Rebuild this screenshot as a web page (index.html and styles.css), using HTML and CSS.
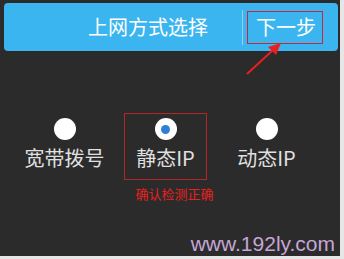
FILE: index.html
```html
<!DOCTYPE html>
<html>
<head>
	<title>上网方式选择</title>
	<link rel="stylesheet" href="styles.css">
</head>
<body>
	<div class="screen">
		<div class="topbar">
			<span class="title">上网方式选择</span>
			<span class="divider"></span>
			<span class="next">下一步</span>
		</div>
		<div class="options">
			<div class="opt">
				<div class="box">
					<span class="radio"></span>
					<span class="label">宽带拨号</span>
				</div>
			</div>
			<div class="opt">
				<div class="box marked">
					<span class="radio checked"></span>
					<span class="label">静态IP</span>
				</div>
				<p class="note">确认检测正确</p>
			</div>
			<div class="opt">
				<div class="box">
					<span class="radio"></span>
					<span class="label">动态IP</span>
				</div>
			</div>
		</div>
		<div class="watermark">www.192ly.com</div>
		<svg class="arrow" width="50" height="40" viewBox="0 0 50 40">
			<line x1="4" y1="36" x2="30" y2="12" stroke="#e8201e" stroke-width="2"/>
			<polygon points="38,5 25,9 33,17" fill="#e8201e"/>
		</svg>
	</div>
</body>
</html>
```

FILE: styles.css
```css
body {
	margin: 0;
	background: #e6e6e6;
	font-family: "Noto Sans CJK SC", "Noto Sans", sans-serif;
}

.screen {
	position: relative;
	width: 340px;
	height: 256px;
	background: #2b2b2b;
	overflow: hidden;
}

.topbar {
	display: flex;
	align-items: center;
	margin: 3px 0 0 4px;
	width: 334px;
	height: 48px;
	background: #3ab5ef;
	border-radius: 4px;
	color: white;
	font-size: 20px;
	line-height: 24px;
}

.title {
	margin-left: 84px;
}

.divider {
	width: 1px;
	height: 35px;
	margin-left: 34px;
	background: #8ed3f4;
}

.next {
	box-sizing: border-box;
	width: 76px;
	height: 33px;
	margin-left: 4px;
	padding: 3px 0 0 8px;
	border: 1px solid #c8283a;
}

.options {
	display: flex;
	margin: 62px 0 0 14px;
}

.opt {
	display: flex;
	flex-direction: column;
	align-items: center;
	width: 101px;
}

.box {
	box-sizing: border-box;
	display: flex;
	flex-direction: column;
	align-items: center;
	width: 83px;
	height: 67px;
	padding-top: 4px;
	border: 1px solid transparent;
}

.box.marked {
	border-color: #b3262a;
}

.radio {
	display: flex;
	align-items: center;
	justify-content: center;
	width: 22px;
	height: 22px;
	border-radius: 50%;
	background: white;
}

.radio.checked::after {
	content: "";
	width: 9px;
	height: 9px;
	border-radius: 50%;
	background: #2f7fd6;
}

.label {
	margin-top: 6px;
	color: #e0e0e0;
	font-size: 20px;
	line-height: 24px;
	white-space: nowrap;
}

.note {
	margin: 6px 0 0;
	padding-left: 18px;
	color: #e8201e;
	font-size: 13px;
	line-height: 16px;
	white-space: nowrap;
}

.watermark {
	margin-top: 30px;
	padding-right: 5px;
	text-align: right;
	font-family: "Liberation Sans", Arial, sans-serif;
	font-size: 21px;
	line-height: 24px;
	color: #c6a6d6;
}

.arrow {
	position: absolute;
	left: 243px;
	top: 38px;
}
```
